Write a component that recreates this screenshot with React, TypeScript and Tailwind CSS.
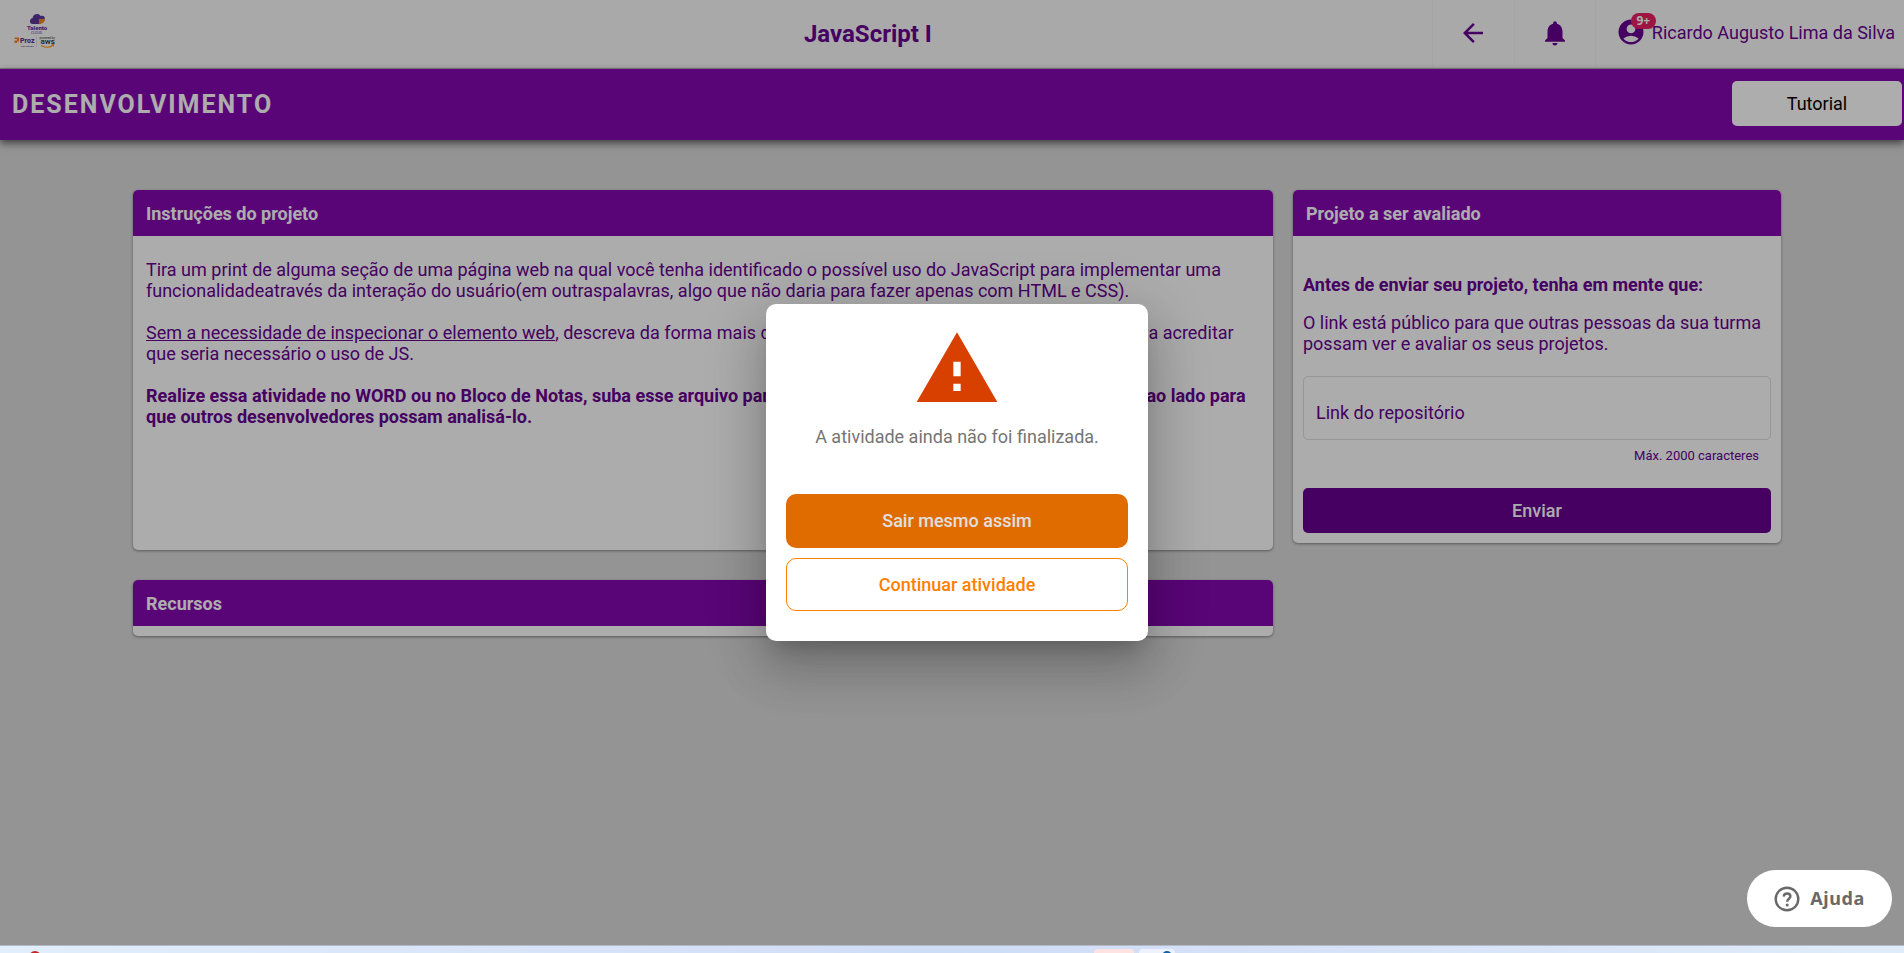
import type { ReactNode } from "react";
import { MdAccountCircle, MdArrowBack, MdNotifications, MdWarning } from "react-icons/md";

function Logo() {
  return (
    <svg viewBox="0 0 42 36" className="h-9 w-[42px]" role="img" aria-label="Talento Cloud">
      <path d="M18.500 12C15.200 12 15 6.800 18.600 6C19 2 24.500 .5 26.500 4C29.500 3.400 31.600 5 30.500 7L25.500 12Z" fill="#5c359b" />
      <path d="M25 7h6c0 2.500-2 5-6 5Z" fill="#f58220" />
      <text x="13" y="18" fontFamily="Roboto, sans-serif" fontSize="6" fontWeight="900" fill="#5c359b">Talento</text>
      <text x="17" y="21.500" fontFamily="Roboto, sans-serif" fontSize="3.500" fill="#5c359b">CLOUD</text>
      <path d="M.5 25.500H5v4H3V31H.5v-2.500H3v-1.500H.5Z" fill="#f58220" />
      <text x="6" y="31" fontFamily="Roboto, sans-serif" fontSize="7" fontWeight="900" fill="#5c359b">Proz</text>
      <text x="7" y="34.500" fontFamily="Roboto, sans-serif" fontSize="2.500" fill="#5c359b">EDUCAÇÃO</text>
      <path d="M22.500 24v11" stroke="#ccc" strokeWidth=".5" />
      <text x="25.500" y="26.500" fontFamily="Roboto, sans-serif" fontSize="3" fill="#333">powered by</text>
      <text x="26.500" y="32" fontFamily="Roboto, sans-serif" fontSize="8" fontWeight="500" fill="#252f3e">aws</text>
      <path d="M27 33.500c4 2.500 9 2.200 12-.5M37.500 32.800l2.200-.2-.5 2" fill="none" stroke="#f90" strokeWidth="1.100" />
    </svg>
  );
}

function HelpIcon() {
  return (
    <svg viewBox="0 0 26 26" className="size-[26px]" fill="none" stroke="currentColor" strokeWidth="2.400" aria-hidden="true">
      <circle cx="13" cy="13" r="11.300" />
      <path d="M9.700 10.600c.2-2 1.500-3.100 3.400-3.100 2 0 3.300 1.200 3.300 2.800 0 2.500-3.200 2.500-3.200 5.500" />
      <circle cx="13.200" cy="19" r="1.500" fill="currentColor" stroke="none" />
    </svg>
  );
}

function Card({ title, className = "", children }: { title: string; className?: string; children?: ReactNode }) {
  return (
    <section className={`overflow-hidden rounded-[5px] bg-[#fefefe] shadow-[0_1px_3px_rgba(0,0,0,0.4)] ${className}`}>
      <h2 className="flex h-[46px] items-center bg-[#8408b0] px-[13px] pt-0.5 text-lg font-bold text-white">{title}</h2>
      {children}
    </section>
  );
}

export default function App() {
  return (
    <div className="flex min-h-screen flex-col font-[Roboto,sans-serif] text-lg leading-[21px] text-[#660090]">
      <div className="relative flex grow flex-col bg-[#dadada]">
        <header className="flex h-[69px] border-b border-[#bbb] bg-[#fafafa]">
          <div className="w-[304px] pt-3 pl-3.5">
            <Logo />
          </div>
          <h1 className="grow pt-5 text-center text-2xl leading-7 font-bold">JavaScript I</h1>
          <div className="flex">
            <button type="button" aria-label="Voltar" className="flex h-[66px] w-[82px] items-center justify-center border-l border-[#f3f3f3]">
              <MdArrowBack size={30} />
            </button>
            <button type="button" aria-label="Notificações" className="flex h-[66px] w-[81px] items-center justify-center border-l border-[#f3f3f3]">
              <MdNotifications size={30} />
            </button>
            <button type="button" className="flex h-[66px] items-center gap-1.5 border-l border-[#f3f3f3] pr-[9px] pb-0.5 pl-5 whitespace-nowrap">
              <span className="relative">
                <MdAccountCircle size={30} />
                <span className="absolute -top-1 left-[15px] flex h-4 w-[25px] items-center justify-center rounded-full bg-[#e91e63] font-['Noto_Sans',sans-serif] text-xs font-bold text-white">9+</span>
              </span>
              Ricardo Augusto Lima da Silva
            </button>
          </div>
        </header>

        <div className="flex h-[71px] items-start justify-between bg-[#8408b0] pt-3 pr-0.5 pl-3 shadow-[0_3px_8px_rgba(0,0,0,0.6)]">
          <h2 className="text-[25px] leading-12 font-bold tracking-[2px] text-white">DESENVOLVIMENTO</h2>
          <button type="button" className="h-[45px] w-[170px] rounded-[5px] bg-white text-black">Tutorial</button>
        </div>

        <main className="grid grid-cols-[minmax(0,1fr)_488px] items-start gap-5 pt-[50px] pr-[123px] pl-[133px]">
          <div className="flex flex-col gap-[30px]">
            <Card title="Instruções do projeto" className="min-h-[360px]">
              <div className="flex flex-col gap-[21px] overflow-hidden px-[13px] pt-[23px] whitespace-nowrap">
                <p>
                  Tira um print de alguma seção de uma página web na qual você tenha identificado o possível uso do JavaScript para implementar uma
                  <br />
                  funcionalidadeatravés da interação do usuário(em outraspalavras, algo que não daria para fazer apenas com HTML e CSS).
                </p>
                <p>
                  <u>Sem a necessidade de inspecionar o elemento web</u>, descreva da forma mais detalhada possível o elemento e o que te levaria a acreditar
                  <br />
                  que seria necessário o uso de JS.
                </p>
                <p className="font-bold">
                  Realize essa atividade no WORD ou no Bloco de Notas, suba esse arquivo para a internet e compartilhe o seu link no campo ao lado para
                  <br />
                  que outros desenvolvedores possam analisá-lo.
                </p>
              </div>
            </Card>
            <Card title="Recursos" className="h-14" />
          </div>

          <Card title="Projeto a ser avaliado">
            <form className="flex flex-col px-2.5 pt-[38px] pb-2.5" onSubmit={(e) => e.preventDefault()}>
              <h3 className="font-bold">Antes de enviar seu projeto, tenha em mente que:</h3>
              <p className="pt-[17px]">O link está público para que outras pessoas da sua turma possam ver e avaliar os seus projetos.</p>
              <input
                type="text"
                aria-label="Link do repositório"
                placeholder="Link do repositório"
                maxLength={2000}
                className="mt-[22px] h-16 w-full rounded-[5px] border border-[#dedede] bg-transparent px-3 pt-2 placeholder:text-[#660090] placeholder:opacity-100"
              />
              <p className="pt-2 pr-3 text-right text-[13px] leading-4">Máx. 2000 caracteres</p>
              <button type="submit" className="mt-6 h-[45px] rounded-[5px] bg-[#660090] font-medium text-white">Enviar</button>
            </form>
          </Card>
        </main>

        <div className="absolute inset-0 flex items-center justify-center bg-black/32 pl-2.5">
          <div
            role="dialog"
            aria-modal="true"
            aria-label="Atividade não finalizada"
            className="flex w-[382px] flex-col items-center rounded-[10px] bg-white px-5 pt-[21px] pb-[30px] shadow-[0_14px_19px_-9px_rgba(0,0,0,0.2),0_30px_48px_4px_rgba(0,0,0,0.14),0_11px_58px_10px_rgba(0,0,0,0.12)]"
          >
            <MdWarning size={88} color="#d84000" />
            <p className="pt-[13px] text-[#757575]">A atividade ainda não foi finalizada.</p>
            <button type="button" className="mt-[47px] h-[54px] w-full rounded-[10px] bg-[#e06c00] pb-0.5 font-medium text-[#e0e0e0]">Sair mesmo assim</button>
            <button type="button" className="mt-2.5 h-[53px] w-full rounded-[10px] border border-[#ff7f00] font-medium text-[#ff7f00]">Continuar atividade</button>
          </div>
        </div>

        <button
          type="button"
          className="absolute right-3 bottom-[18px] flex h-[57px] w-[145px] items-center justify-center gap-2.5 rounded-full bg-white font-['Noto_Sans',sans-serif] font-bold tracking-[0.6px] text-[#696969]"
        >
          <HelpIcon />
          Ajuda
        </button>
      </div>

      <footer className="relative h-2 shrink-0 overflow-hidden border-t border-[#b4b9c8] bg-linear-to-r from-[#e2eefb] via-[#cfdcf6] to-[#e0ecf9]">
        <svg className="absolute top-[5px] left-[29px] h-2 w-3" viewBox="0 0 12 8" aria-hidden="true">
          <ellipse cx="6" cy="6" rx="6" ry="6" fill="#c62828" />
        </svg>
        <span className="absolute top-[3px] left-[1094px] h-4 w-10 rounded bg-[#ffe3e3]" />
        <span className="absolute top-[3px] left-[1139px] h-4 w-9 rounded bg-[#edf2fd]" />
        <span className="absolute top-[5px] left-[1162px] h-2 w-2.5 rounded-t-full bg-[#1263a8]" />
      </footer>
    </div>
  );
}
